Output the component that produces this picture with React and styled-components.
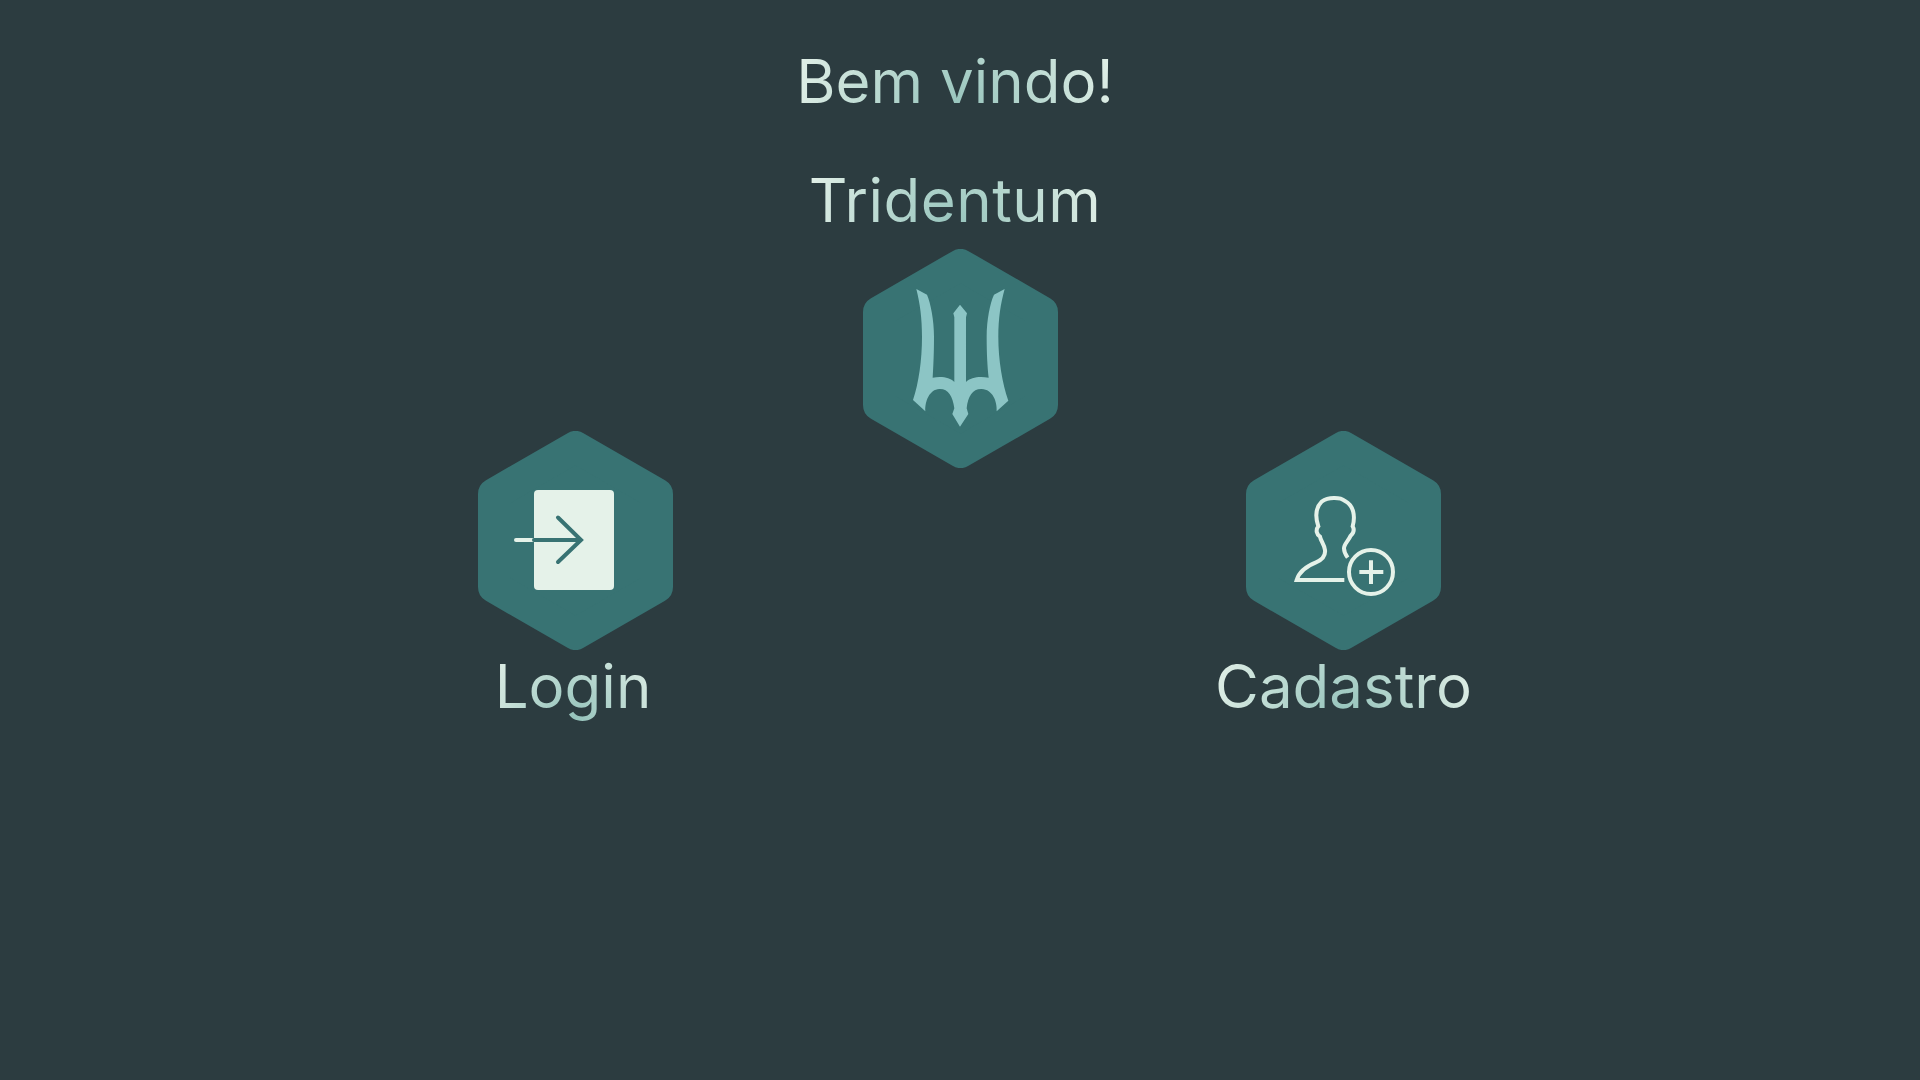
import React from 'react';
import styled, { createGlobalStyle } from 'styled-components';

const Global = createGlobalStyle`
  html, body { margin: 0; padding: 0; background: #2c3c40; }
`;

const Page = styled.main`
  min-height: 100vh;
  display: flex;
  flex-direction: column;
  padding-top: 46px;
  box-sizing: border-box;
  background: #2c3c40;
`;

const Header = styled.header`
  display: flex;
  flex-direction: column;
  align-items: center;
  gap: 49px;
  padding-right: 10px;
  margin-bottom: 14px;
`;

const GradientText = styled.span`
  display: block;
  width: fit-content;
  margin: 0;
  margin-right: ${p => p.$shift || 0}px;
  font-family: Inter, "Noto Sans", sans-serif;
  font-weight: 400;
  font-size: 60px;
  line-height: 70px;
  letter-spacing: ${p => p.$spacing || 0}px;
  white-space: nowrap;
  color: transparent;
  background: radial-gradient(circle at 50% 100%, #93c2ba 0%, #e4f1e9 100%);
  -webkit-background-clip: text;
  background-clip: text;
`;

const Options = styled.nav`
  display: grid;
  grid-template-columns: 385px 383px 195px;
  padding-left: 478px;
  align-items: start;
`;

const Tile = styled.a`
  display: flex;
  flex-direction: column;
  align-items: center;
  width: 195px;
  gap: 1px;
  margin-top: ${p => p.$offset || 0}px;
  cursor: pointer;
`;

const HexSvg = styled.svg`
  display: block;
  width: 195px;
  height: 219px;
  flex: none;
`;

const HexShape = styled.polygon`
  fill: #387373;
  stroke: #387373;
  stroke-width: 32px;
  stroke-linejoin: round;
`;

const Hex = ({ children }) => (
  <HexSvg viewBox="0 0 195 219">
    <HexShape points="97.5,16 179,63 179,156 97.5,203 16,156 16,63" />
    {children}
  </HexSvg>
);

const TridentIcon = () => (
  <g transform="translate(37 31) scale(0.3333)">
    <path
      fill="#8cc5c5"
      d="M49 27 L81 44 C92 70 102 120 102 170 C102 220 100 260 98 293 C122 288 150 291 163 306 L163 112 L160 100 L180 74 L201 100 L198 112 L198 306 C212 291 240 288 266 293 C262 260 260 220 260 170 C260 120 270 70 282 44 L314 27 C302 70 295 115 295 170 C295 240 307 310 325 362 L290 394 C292 365 278 328 245 327 C218 326 204 348 200 385 L205 402 L180 440 L157 402 L163 385 C158 348 145 326 118 327 C88 328 74 365 76 394 L39 360 C56 310 66 240 66 170 C66 115 60 70 49 27 Z"
    />
  </g>
);

const LoginIcon = () => (
  <>
    <rect x="56" y="59" width="80" height="100" rx="4" fill="#e5f2e9" />
    <path d="M38 109 H56" stroke="#e5f2e9" strokeWidth="4" strokeLinecap="round" fill="none" />
    <path d="M56 109 H103 M80 86.5 L103 109 L80 131" stroke="#387373" strokeWidth="4" strokeLinecap="round" strokeLinejoin="miter" fill="none" />
  </>
);

const UserIcon = () => (
  <g transform="translate(34 54) scale(0.3333)" fill="none" stroke="#e5f2e9" strokeWidth="12">
    <path d="M193 285 H50 C58 258 80 243 108 232 C128 224 137 212 135 195 C133 178 122 168 120 155 C110 148 106 135 115 124 C107 100 105 70 125 50 C145 36 180 36 195 48 C222 62 226 95 218 124 C224 135 220 145 212 152 C205 168 192 178 192 190 C192 200 197 210 203 218" />
    <circle cx="273" cy="261" r="66" />
    <path d="M238 261 H310 M273 226 V297" />
  </g>
);

export default function App() {
  return (
    <Page>
      <Global />
      <Header>
        <GradientText as="h1">Bem vindo!</GradientText>
        <GradientText as="h2" $spacing={0.5}>Tridentum</GradientText>
      </Header>
      <Options>
        <Tile $offset={182}>
          <Hex><LoginIcon /></Hex>
          <GradientText $shift={5}>Login</GradientText>
        </Tile>
        <Tile>
          <Hex><TridentIcon /></Hex>
        </Tile>
        <Tile $offset={182}>
          <Hex><UserIcon /></Hex>
          <GradientText>Cadastro</GradientText>
        </Tile>
      </Options>
    </Page>
  );
}
